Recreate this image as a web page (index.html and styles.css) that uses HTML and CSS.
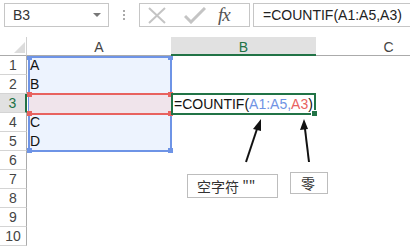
FILE: index.html
```html
<!DOCTYPE html>
<html lang="zh-CN">
<head>
    <meta charset="UTF-8">
    <title>COUNTIF</title>
    <link rel="stylesheet" href="styles.css">
</head>
<body>

<div class="toolbar">
    <div class="namebox">
        <span>B3</span>
        <span class="drop"></span>
    </div>
    <div class="dots"><i></i><i></i><i></i></div>
    <div class="fxbox">
        <svg class="ic-x" width="20" height="17" viewBox="0 0 20 17"><path d="M2 1 L18 16 M18 1 L2 16" stroke="#c4c4c4" stroke-width="2" fill="none"/></svg>
        <svg class="ic-ok" width="22" height="17" viewBox="0 0 22 17"><path d="M1 9 L7 15 L21 1" stroke="#c4c4c4" stroke-width="3" fill="none"/></svg>
        <span class="fx">fx</span>
    </div>
    <div class="formula">=COUNTIF(A1:A5,A3)</div>
</div>

<div class="sheet">
    <div class="corner"><span class="tri"></span></div>
    <div class="colhead">A</div>
    <div class="colhead on">B</div>
    <div class="colhead">C</div>

    <div class="rowhead">1</div><div class="cell">A</div><div class="cell"></div><div class="cell"></div>
    <div class="rowhead">2</div><div class="cell">B</div><div class="cell"></div><div class="cell"></div>
    <div class="rowhead on">3</div><div class="cell"></div><div class="cell"></div><div class="cell"></div>
    <div class="rowhead">4</div><div class="cell">C</div><div class="cell"></div><div class="cell"></div>
    <div class="rowhead">5</div><div class="cell">D</div><div class="cell"></div><div class="cell"></div>
    <div class="rowhead">6</div><div class="cell"></div><div class="cell"></div><div class="cell"></div>
    <div class="rowhead">7</div><div class="cell"></div><div class="cell"></div><div class="cell"></div>
    <div class="rowhead">8</div><div class="cell"></div><div class="cell"></div><div class="cell"></div>
    <div class="rowhead">9</div><div class="cell"></div><div class="cell"></div><div class="cell"></div>
    <div class="rowhead">10</div><div class="cell"></div><div class="cell"></div><div class="cell"></div>

    <!-- reference ranges drawn over the grid -->
    <div class="range-blue">
        <i class="sq tl"></i><i class="sq tr"></i><i class="sq bl"></i><i class="sq br"></i>
    </div>
    <div class="range-red">
        <i class="sq tl"></i><i class="sq tr"></i><i class="sq bl"></i><i class="sq br"></i>
    </div>
    <div class="active">
        <span>=COUNTIF(<span class="ref-b">A1:A5</span><span class="ref-b">,</span><span class="ref-r">A3</span>)</span>
        <i class="handle"></i>
    </div>
</div>

<svg class="arrows" width="410" height="247" viewBox="0 0 410 247">
    <line x1="246" y1="162" x2="257" y2="129" stroke="#111" stroke-width="2"/>
    <polygon points="261,119 253,129 261,131" fill="#111"/>
    <line x1="309" y1="162" x2="305" y2="129" stroke="#111" stroke-width="2"/>
    <polygon points="304,119 300,130 308,129" fill="#111"/>
</svg>

<div class="note note-empty">空字符 ""</div>
<div class="note note-zero">零</div>

</body>
</html>
```

FILE: styles.css
```css
body {
    margin: 0;
    font-family: "Liberation Sans", Arial, "Noto Sans CJK SC", sans-serif;
    font-size: 14px;
    color: #222;
    background: #fff;
    width: 410px;
    height: 247px;
    overflow: hidden;
    position: relative;
}
.toolbar {
    display: flex;
    align-items: flex-start;
    height: 37px;
    padding: 3px 0 0 4px;
    box-sizing: border-box;
}
.namebox {
    width: 105px;
    height: 24px;
    border: 1px solid #c6c6c6;
    box-sizing: border-box;
    display: flex;
    align-items: center;
    justify-content: space-between;
    padding: 0 7px 0 8px;
    color: #333;
}
.drop {
    width: 0;
    height: 0;
    border-left: 4px solid transparent;
    border-right: 4px solid transparent;
    border-top: 4px solid #777;
}
.dots {
    width: 30px;
    display: flex;
    flex-direction: column;
    align-items: center;
    gap: 2px;
    padding-top: 7px;
}
.dots i {
    width: 2px;
    height: 2px;
    background: #aaa;
}
.fxbox {
    width: 111px;
    height: 24px;
    border: 1px solid #c6c6c6;
    box-sizing: border-box;
    display: flex;
    align-items: center;
    padding-left: 7px;
}
.ic-ok {
    margin-left: 17px;
}
.fx {
    margin-left: 12px;
    font-family: "Liberation Serif", serif;
    font-style: italic;
    font-size: 19px;
    color: #555;
    letter-spacing: -1px;
}
.formula {
    margin-left: 3px;
    flex: 1;
    height: 24px;
    border: 1px solid #c6c6c6;
    border-right: none;
    box-sizing: border-box;
    padding-left: 9px;
    line-height: 22px;
    color: #222;
}
.sheet {
    position: relative;
    width: 410px;
    overflow: hidden;
    display: grid;
    grid-template-columns: 27px 144px 145px 145px;
    grid-auto-rows: 19px;
}
.corner {
    border-bottom: 1px solid #ababab;
    border-right: 1px solid #d0d0d0;
    position: relative;
}
.tri {
    position: absolute;
    right: 1px;
    bottom: 2px;
    width: 0;
    height: 0;
    border-left: 11px solid transparent;
    border-bottom: 11px solid #dcdcdc;
}
.colhead {
    border-bottom: 1px solid #ababab;
    text-align: center;
    line-height: 20px;
    color: #444;
}
.colhead.on {
    background: #e1e1e1;
    border-bottom: 2px solid #217346;
    color: #217346;
}
.rowhead {
    border-bottom: 1px solid #d4d4d4;
    border-right: 1px solid #ababab;
    text-align: center;
    line-height: 19px;
    color: #444;
}
.rowhead.on {
    background: #e1e1e1;
    border-right: 2px solid #217346;
    color: #217346;
}
.cell {
    line-height: 19px;
    padding-left: 3px;
    color: #111;
}
.range-blue {
    position: absolute;
    left: 28px;
    top: 19px;
    width: 144px;
    height: 96px;
    border: 2px solid #6e94e6;
    background: rgba(215, 228, 252, 0.45);
    box-sizing: border-box;
    z-index: -1;
}
.range-red {
    position: absolute;
    left: 29px;
    top: 56px;
    width: 142px;
    height: 22px;
    border-top: 2px solid #e8625f;
    border-bottom: 2px solid #e8625f;
    background: #f0e4eb;
    box-sizing: border-box;
}
.sq {
    position: absolute;
    width: 5px;
    height: 5px;
}
.range-blue .sq { background: #6e94e6; }
.range-red .sq { background: #e8625f; }
.range-blue .tl { left: -3px; top: -3px; }
.range-blue .tr { right: -3px; top: -3px; }
.range-blue .bl { left: -3px; bottom: -3px; }
.range-blue .br { right: -3px; bottom: -3px; }
.range-red .tl { left: -2px; top: -3px; }
.range-red .tr { right: -2px; top: -3px; }
.range-red .bl { left: -2px; bottom: -3px; }
.range-red .br { right: -2px; bottom: -3px; }
.active {
    position: absolute;
    left: 171px;
    top: 56px;
    width: 145px;
    height: 22px;
    border: 2px solid #217346;
    box-sizing: border-box;
    padding-left: 1px;
    line-height: 18px;
    color: #111;
    white-space: nowrap;
}
.ref-b { color: #6f93e4; }
.ref-r { color: #e8625f; }
.handle {
    position: absolute;
    right: -4px;
    bottom: -4px;
    width: 5px;
    height: 5px;
    background: #217346;
    border: 1px solid #fff;
}
.arrows {
    position: absolute;
    left: 0;
    top: 0;
}
.note {
    position: absolute;
    border: 1px solid #bdbdbd;
    box-sizing: border-box;
    background: #fff;
    font-family: "Noto Sans CJK SC", sans-serif;
    font-size: 14px;
    color: #333;
    line-height: 22px;
}
.note-empty {
    left: 187px;
    top: 174px;
    width: 91px;
    height: 24px;
    padding-left: 9px;
}
.note-zero {
    left: 290px;
    top: 172px;
    width: 38px;
    height: 22px;
    line-height: 20px;
    padding-left: 10px;
}
```
